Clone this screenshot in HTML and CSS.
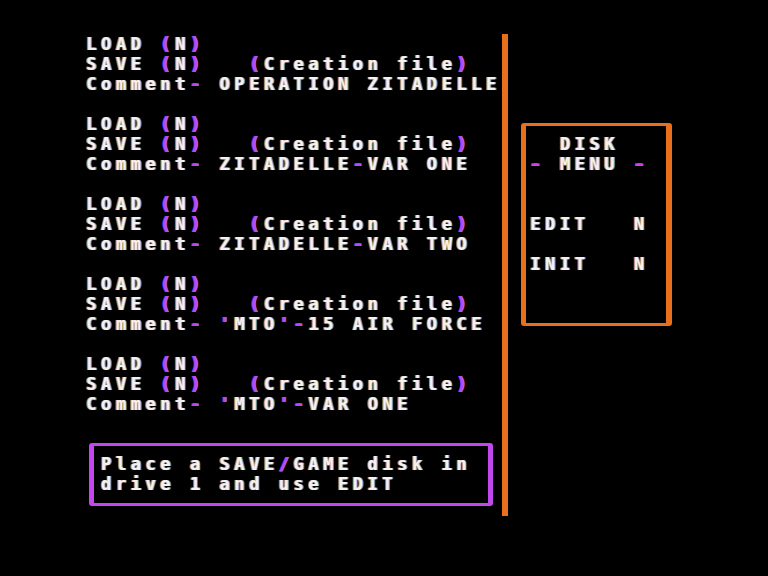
FILE: index.html
```html
<!DOCTYPE html>
<html>
<head>
<meta charset="utf-8">
<link rel="stylesheet" href="styles.css">
</head>
<body>
<div class="screen">
  <div class="left">
    <div class="group">
      <div class="row">LOAD <span class="p">(</span>N<span class="p">)</span></div>
      <div class="row">SAVE <span class="p">(</span>N<span class="p">)</span>   <span class="p">(</span>Creation file<span class="p">)</span></div>
      <div class="row">Comment<span class="p">-</span> OPERATION ZITADELLE</div>
    </div>
    <div class="group">
      <div class="row">LOAD <span class="p">(</span>N<span class="p">)</span></div>
      <div class="row">SAVE <span class="p">(</span>N<span class="p">)</span>   <span class="p">(</span>Creation file<span class="p">)</span></div>
      <div class="row">Comment<span class="p">-</span> ZITADELLE<span class="p">-</span>VAR ONE</div>
    </div>
    <div class="group">
      <div class="row">LOAD <span class="p">(</span>N<span class="p">)</span></div>
      <div class="row">SAVE <span class="p">(</span>N<span class="p">)</span>   <span class="p">(</span>Creation file<span class="p">)</span></div>
      <div class="row">Comment<span class="p">-</span> ZITADELLE<span class="p">-</span>VAR TWO</div>
    </div>
    <div class="group">
      <div class="row">LOAD <span class="p">(</span>N<span class="p">)</span></div>
      <div class="row">SAVE <span class="p">(</span>N<span class="p">)</span>   <span class="p">(</span>Creation file<span class="p">)</span></div>
      <div class="row">Comment<span class="p">-</span> <span class="p">'</span>MTO<span class="p">'-</span>15 AIR FORCE</div>
    </div>
    <div class="group last">
      <div class="row">LOAD <span class="p">(</span>N<span class="p">)</span></div>
      <div class="row">SAVE <span class="p">(</span>N<span class="p">)</span>   <span class="p">(</span>Creation file<span class="p">)</span></div>
      <div class="row">Comment<span class="p">-</span> <span class="p">'</span>MTO<span class="p">'-</span>VAR ONE</div>
    </div>
    <div class="message">
      <div class="row">Place a SAVE<span class="p">/</span>GAME disk in</div>
      <div class="row">drive 1 and use EDIT</div>
    </div>
  </div>
  <div class="divider"></div>
  <div class="menu">
    <div class="row">  DISK</div>
    <div class="row"><span class="m">-</span> MENU <span class="m">-</span></div>
    <div class="row"> </div>
    <div class="row"> </div>
    <div class="row">EDIT   N</div>
    <div class="row"> </div>
    <div class="row">INIT   N</div>
    <div class="row"> </div>
    <div class="row"> </div>
  </div>
</div>
</body>
</html>
```
FILE: styles.css
```css
html, body {
  margin: 0;
  padding: 0;
  background: #000;
}
.screen {
  width: 768px;
  height: 576px;
  box-sizing: border-box;
  padding: 34px 0 0 86.3px;
  display: flex;
  align-items: flex-start;
  background: #000;
  color: #f2f2f2;
  font-family: "DejaVu Sans Mono", "Liberation Mono", monospace;
  font-weight: bold;
  font-size: 17px;
  line-height: 20px;
  letter-spacing: 4.57px;
  text-shadow: -1.2px 0 0 rgba(236, 150, 70, 0.85), 1.2px 0 0 rgba(110, 180, 255, 0.85);
  overflow: hidden;
}
.row {
  height: 20px;
  white-space: pre;
}
.p {
  color: #b24cf4;
  text-shadow: -1px 0 0 #a040f0, 1px 0 0 #c060ff;
}
.m {
  color: #d040e8;
  text-shadow: -1.5px 0 0 #d040e8, 1.5px 0 0 #d040e8;
}
.left {
  width: 415.7px;
  flex: none;
}
.group {
  margin-bottom: 20px;
}
.group.last {
  margin-bottom: 0;
}
.message {
  margin: 29px 0 0 2.7px;
  width: 404px;
  box-sizing: border-box;
  border: 3px solid #c048ec;
  border-left-width: 5px;
  border-right-width: 5px;
  border-radius: 3px;
  padding: 8px 0 9px 7.1px;
}
.divider {
  width: 6px;
  height: 482px;
  background: #e8701c;
  flex: none;
}
.menu {
  margin: 89px 0 0 13px;
  width: 151px;
  box-sizing: border-box;
  border: 3px solid #e8701c;
  border-left-width: 5px;
  border-right-width: 6px;
  border-radius: 3px;
  padding: 8px 0 9px 4.3px;
  flex: none;
}
```
